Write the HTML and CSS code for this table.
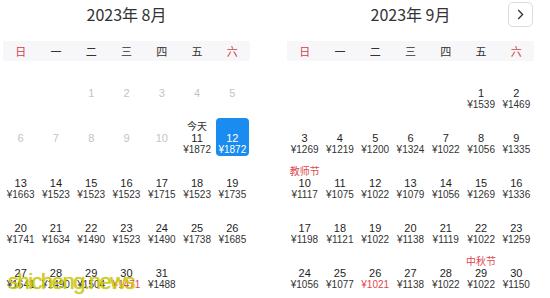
FILE: index.html
```html
<!DOCTYPE html>
<html lang="zh-CN">
<head>
<meta charset="utf-8">
<title>日历</title>
<link rel="stylesheet" href="styles.css">
</head>
<body>
<div class="page">
  <div class="months">
    <section class="month">
      <header class="month-head">
        <span></span>
        <h2 class="month-title">2023年 8月</h2>
        <span></span>
      </header>
      <div class="weekdays">
        <span class="wd red">日</span><span class="wd">一</span><span class="wd">二</span><span class="wd">三</span><span class="wd">四</span><span class="wd">五</span><span class="wd red">六</span>
      </div>
      <div class="days">
        <div class="cell"></div><div class="cell"></div>
        <div class="cell off"><span class="lbl"></span><span class="num">1</span></div>
        <div class="cell off"><span class="lbl"></span><span class="num">2</span></div>
        <div class="cell off"><span class="lbl"></span><span class="num">3</span></div>
        <div class="cell off"><span class="lbl"></span><span class="num">4</span></div>
        <div class="cell off"><span class="lbl"></span><span class="num">5</span></div>

        <div class="cell off"><span class="lbl"></span><span class="num">6</span></div>
        <div class="cell off"><span class="lbl"></span><span class="num">7</span></div>
        <div class="cell off"><span class="lbl"></span><span class="num">8</span></div>
        <div class="cell off"><span class="lbl"></span><span class="num">9</span></div>
        <div class="cell off"><span class="lbl"></span><span class="num">10</span></div>
        <div class="cell"><span class="lbl">今天</span><span class="num">11</span><span class="price">¥1872</span></div>
        <div class="cell sel"><span class="lbl"></span><span class="num">12</span><span class="price">¥1872</span></div>

        <div class="cell"><span class="lbl"></span><span class="num">13</span><span class="price">¥1663</span></div>
        <div class="cell"><span class="lbl"></span><span class="num">14</span><span class="price">¥1523</span></div>
        <div class="cell"><span class="lbl"></span><span class="num">15</span><span class="price">¥1523</span></div>
        <div class="cell"><span class="lbl"></span><span class="num">16</span><span class="price">¥1523</span></div>
        <div class="cell"><span class="lbl"></span><span class="num">17</span><span class="price">¥1715</span></div>
        <div class="cell"><span class="lbl"></span><span class="num">18</span><span class="price">¥1523</span></div>
        <div class="cell"><span class="lbl"></span><span class="num">19</span><span class="price">¥1735</span></div>

        <div class="cell"><span class="lbl"></span><span class="num">20</span><span class="price">¥1741</span></div>
        <div class="cell"><span class="lbl"></span><span class="num">21</span><span class="price">¥1634</span></div>
        <div class="cell"><span class="lbl"></span><span class="num">22</span><span class="price">¥1490</span></div>
        <div class="cell"><span class="lbl"></span><span class="num">23</span><span class="price">¥1523</span></div>
        <div class="cell"><span class="lbl"></span><span class="num">24</span><span class="price">¥1490</span></div>
        <div class="cell"><span class="lbl"></span><span class="num">25</span><span class="price">¥1738</span></div>
        <div class="cell"><span class="lbl"></span><span class="num">26</span><span class="price">¥1685</span></div>

        <div class="cell"><span class="lbl"></span><span class="num">27</span><span class="price">¥1641</span></div>
        <div class="cell"><span class="lbl"></span><span class="num">28</span><span class="price">¥1490</span></div>
        <div class="cell"><span class="lbl"></span><span class="num">29</span><span class="price">¥1504</span></div>
        <div class="cell"><span class="lbl"></span><span class="num">30</span><span class="price low">¥1471</span></div>
        <div class="cell"><span class="lbl"></span><span class="num">31</span><span class="price">¥1488</span></div>
      </div>
    </section>

    <section class="month">
      <header class="month-head">
        <span></span>
        <h2 class="month-title">2023年 9月</h2>
        <button class="next" type="button" aria-label="下个月">
          <svg width="7" height="11" viewBox="0 0 7 11"><path d="M1.2 1 L5.6 5.5 L1.2 10" fill="none" stroke="#333" stroke-width="1.3"/></svg>
        </button>
      </header>
      <div class="weekdays">
        <span class="wd red">日</span><span class="wd">一</span><span class="wd">二</span><span class="wd">三</span><span class="wd">四</span><span class="wd">五</span><span class="wd red">六</span>
      </div>
      <div class="days">
        <div class="cell"></div><div class="cell"></div><div class="cell"></div><div class="cell"></div><div class="cell"></div>
        <div class="cell"><span class="lbl"></span><span class="num">1</span><span class="price">¥1539</span></div>
        <div class="cell"><span class="lbl"></span><span class="num">2</span><span class="price">¥1469</span></div>

        <div class="cell"><span class="lbl"></span><span class="num">3</span><span class="price">¥1269</span></div>
        <div class="cell"><span class="lbl"></span><span class="num">4</span><span class="price">¥1219</span></div>
        <div class="cell"><span class="lbl"></span><span class="num">5</span><span class="price">¥1200</span></div>
        <div class="cell"><span class="lbl"></span><span class="num">6</span><span class="price">¥1324</span></div>
        <div class="cell"><span class="lbl"></span><span class="num">7</span><span class="price">¥1022</span></div>
        <div class="cell"><span class="lbl"></span><span class="num">8</span><span class="price">¥1056</span></div>
        <div class="cell"><span class="lbl"></span><span class="num">9</span><span class="price">¥1335</span></div>

        <div class="cell"><span class="lbl fest">教师节</span><span class="num">10</span><span class="price">¥1117</span></div>
        <div class="cell"><span class="lbl"></span><span class="num">11</span><span class="price">¥1075</span></div>
        <div class="cell"><span class="lbl"></span><span class="num">12</span><span class="price">¥1022</span></div>
        <div class="cell"><span class="lbl"></span><span class="num">13</span><span class="price">¥1079</span></div>
        <div class="cell"><span class="lbl"></span><span class="num">14</span><span class="price">¥1056</span></div>
        <div class="cell"><span class="lbl"></span><span class="num">15</span><span class="price">¥1269</span></div>
        <div class="cell"><span class="lbl"></span><span class="num">16</span><span class="price">¥1336</span></div>

        <div class="cell"><span class="lbl"></span><span class="num">17</span><span class="price">¥1198</span></div>
        <div class="cell"><span class="lbl"></span><span class="num">18</span><span class="price">¥1121</span></div>
        <div class="cell"><span class="lbl"></span><span class="num">19</span><span class="price">¥1022</span></div>
        <div class="cell"><span class="lbl"></span><span class="num">20</span><span class="price">¥1138</span></div>
        <div class="cell"><span class="lbl"></span><span class="num">21</span><span class="price">¥1119</span></div>
        <div class="cell"><span class="lbl"></span><span class="num">22</span><span class="price">¥1022</span></div>
        <div class="cell"><span class="lbl"></span><span class="num">23</span><span class="price">¥1259</span></div>

        <div class="cell"><span class="lbl"></span><span class="num">24</span><span class="price">¥1056</span></div>
        <div class="cell"><span class="lbl"></span><span class="num">25</span><span class="price">¥1077</span></div>
        <div class="cell"><span class="lbl"></span><span class="num">26</span><span class="price low">¥1021</span></div>
        <div class="cell"><span class="lbl"></span><span class="num">27</span><span class="price">¥1138</span></div>
        <div class="cell"><span class="lbl"></span><span class="num">28</span><span class="price">¥1022</span></div>
        <div class="cell"><span class="lbl fest">中秋节</span><span class="num">29</span><span class="price">¥1022</span></div>
        <div class="cell"><span class="lbl"></span><span class="num">30</span><span class="price">¥1150</span></div>
      </div>
    </section>
  </div>
  <div class="watermark">shicheng.news</div>
</div>
</body>
</html>
```

FILE: styles.css
```css
* { box-sizing: border-box; }
html, body {
  margin: 0;
  padding: 0;
  background: #fff;
}
body {
  font-family: "Liberation Sans", "Noto Sans CJK SC", sans-serif;
  color: #222;
  width: 550px;
  height: 298px;
  overflow: hidden;
}
.page {
  position: relative;
  width: 550px;
  height: 298px;
}
.months {
  display: flex;
  gap: 37px;
  padding-left: 3px;
}
.month {
  width: 247px;
}
.month-head {
  display: grid;
  grid-template-columns: 1fr auto 1fr;
  align-items: center;
  height: 27px;
  padding-top: 1px;
  margin-bottom: 14px;
}
.month-title {
  margin: 0;
  font-family: "Noto Sans CJK SC", sans-serif;
  font-weight: 400;
  font-size: 16px;
  line-height: 26px;
  color: #333;
  text-align: center;
}
.next {
  justify-self: end;
  width: 25px;
  height: 25px;
  margin-right: 1px;
  padding: 0;
  border: 1px solid #dcdcdc;
  border-radius: 5px;
  background: #fff;
  display: flex;
  align-items: center;
  justify-content: center;
}
.next svg { display: block; }
.weekdays {
  display: grid;
  grid-template-columns: repeat(7, 1fr);
  height: 20px;
  background: #f7f7f9;
  border-radius: 2px;
  margin-bottom: 12px;
}
.wd {
  font-family: "Noto Sans CJK SC", sans-serif;
  font-size: 11px;
  line-height: 20px;
  text-align: center;
  color: #333;
}
.wd.red { color: #d2404a; }
.days {
  display: grid;
  grid-template-columns: repeat(7, 1fr);
  grid-auto-rows: 38px;
  row-gap: 7px;
}
.cell {
  display: flex;
  flex-direction: column;
  align-items: center;
  padding-top: 2px;
  white-space: nowrap;
}
.lbl {
  display: block;
  height: 12px;
  font-family: "Noto Sans CJK SC", sans-serif;
  font-size: 10px;
  line-height: 12px;
  color: #333;
}
.lbl.fest { color: #e0484e; }
.num {
  display: block;
  height: 12px;
  font-size: 11px;
  line-height: 12px;
  color: #1e1e1e;
}
.price {
  display: block;
  height: 11px;
  font-size: 10px;
  line-height: 11px;
  color: #333;
}
.price.low { color: #e0484e; }
.cell.off .num { color: #c4c4c4; }
.cell.sel {
  background: #1a8cf0;
  border-radius: 4px;
  margin: 0 1px;
}
.cell.sel .num,
.cell.sel .price { color: #fff; }
.watermark {
  position: absolute;
  left: 8px;
  top: 271px;
  font-family: "Liberation Sans", sans-serif;
  font-size: 22px;
  line-height: 22px;
  letter-spacing: -1.5px;
  color: rgba(215, 210, 0, 0.9);
  text-shadow: 0 0 1px rgba(110, 105, 0, 0.5);
  pointer-events: none;
}
```
